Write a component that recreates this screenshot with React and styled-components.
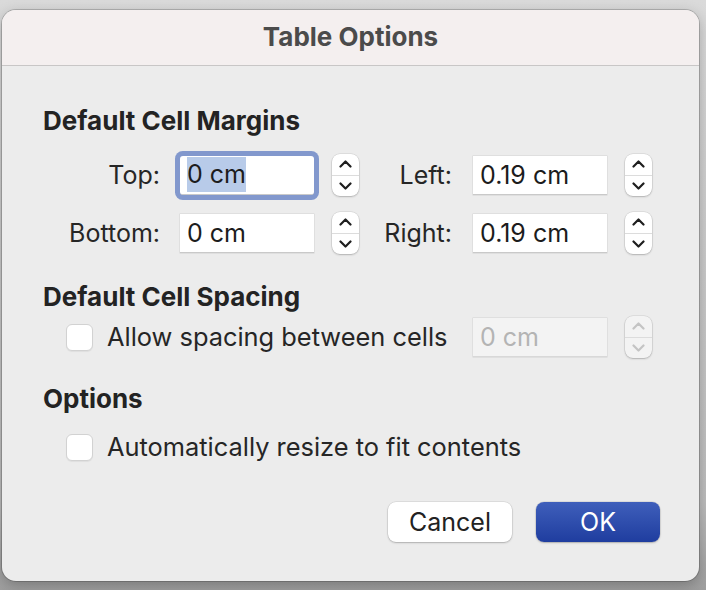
import React from "react"
import styled, { createGlobalStyle } from "styled-components"

const GlobalStyle = createGlobalStyle`
  html, body {
    margin: 0;
    padding: 0;
    width: 706px;
    height: 590px;
    overflow: hidden;
    background: linear-gradient(#dadada, #bdbdbd 85%, #9e9e9e);
    font-family: Inter, "Noto Sans", "Liberation Sans", sans-serif;
  }
`

const Screen = styled.div`
  width: 706px;
  height: 590px;
  padding: 10px 0 0 2px;
  box-sizing: border-box;
`

const Dialog = styled.div`
  width: 697px;
  height: 571px;
  border-radius: 14px;
  background: #ececec;
  overflow: hidden;
  box-shadow: 0 0 0 1px rgba(0, 0, 0, 0.18), 0 4px 14px rgba(0, 0, 0, 0.25);
  display: flex;
  flex-direction: column;
`

const TitleBar = styled.div`
  height: 56px;
  flex-shrink: 0;
  background: #f4efef;
  border-bottom: 1px solid #c8c6c6;
  display: flex;
  align-items: center;
  justify-content: center;
  font-weight: 700;
  font-size: 26px;
  color: #4b4b4b;
  box-sizing: border-box;
  padding-bottom: 2px;
`

const Body = styled.div`
  padding: 42px 0 0 41px;
  display: flex;
  flex-direction: column;
`

const Heading = styled.div`
  font-size: 26px;
  font-weight: 700;
  color: #232323;
  line-height: 26px;
  margin-top: ${p => p.$gap || 0}px;
`

const FieldRows = styled.div`
  display: flex;
  flex-direction: column;
  gap: 16px;
  margin-top: 20px;
`

const FieldRow = styled.div`
  display: flex;
  align-items: center;
`

const Label = styled.label`
  width: ${p => p.$w}px;
  text-align: right;
  margin-right: ${p => p.$mr}px;
  font-size: 25px;
  color: #262626;
  flex-shrink: 0;
`

const Input = styled.div`
  width: 134px;
  height: 39px;
  box-sizing: border-box;
  background: ${p => (p.$disabled ? "#f3f3f3" : "#ffffff")};
  border-bottom: 1px solid ${p => (p.$disabled ? "#d8d8d8" : "#c9c9c9")};
  box-shadow: ${p => (p.$focus ? "0 0 0 5px #8298cd" : "0 0 0 0.5px #d2d2d2")};
  border-radius: ${p => (p.$focus ? "3px" : "0")};
  padding: 0 7px;
  display: flex;
  align-items: center;
  font-size: 25px;
  color: ${p => (p.$disabled ? "#b4b4b4" : "#1c1c1c")};
  flex-shrink: 0;
`

const Selected = styled.span`
  background: #b8cbe9;
  padding: 2px 0 3px;
`

const Stepper = styled.div`
  width: 27px;
  height: 42px;
  margin-left: 18px;
  border-radius: 8px;
  background: ${p => (p.$disabled ? "#f3f3f3" : "#ffffff")};
  box-shadow: 0 0 0 0.5px rgba(0, 0, 0, 0.12), 0 1px 2px rgba(0, 0, 0, 0.2);
  display: flex;
  flex-direction: column;
  overflow: hidden;
  flex-shrink: 0;
`

const StepHalf = styled.div`
  flex: 1;
  display: flex;
  align-items: center;
  justify-content: center;
  & + & {
    border-top: 1px solid #dcdcdc;
  }
`

const CheckRow = styled.div`
  display: flex;
  align-items: center;
  margin-top: ${p => p.$gap}px;
  padding-left: 23px;
`

const CheckBox = styled.span`
  width: 27px;
  height: 27px;
  box-sizing: border-box;
  border-radius: 6px;
  background: #ffffff;
  border: 1px solid #d2d2d2;
  box-shadow: 0 1px 1px rgba(0, 0, 0, 0.06);
  flex-shrink: 0;
`

const CheckText = styled.span`
  font-size: 25.4px;
  line-height: 28px;
  color: #262626;
  margin-left: 14px;
  width: ${p => p.$w || "auto"};
  flex-shrink: 0;
  white-space: nowrap;
`

const Footer = styled.div`
  display: flex;
  gap: 24px;
  margin-top: 41px;
  padding-left: 345px;
`

const Button = styled.button`
  width: 124px;
  height: 40px;
  border: none;
  border-radius: 8px;
  font-family: inherit;
  font-size: 25px;
  color: ${p => (p.$primary ? "#ffffff" : "#222222")};
  background: ${p => (p.$primary ? "linear-gradient(#3f5fbb, #1f3d9f)" : "#ffffff")};
  box-shadow: 0 0 0 0.5px rgba(0, 0, 0, 0.12), 0 1px 2px rgba(0, 0, 0, 0.22);
`

function Chevron({ up, color }) {
  return (
    <svg width="13" height="8" viewBox="0 0 13 8">
      <path
        d={up ? "M1.5 6.5 L6.5 1.5 L11.5 6.5" : "M1.5 1.5 L6.5 6.5 L11.5 1.5"}
        fill="none"
        stroke={color}
        strokeWidth="2.2"
        strokeLinecap="round"
        strokeLinejoin="round"
      />
    </svg>
  )
}

function Spinner({ disabled }) {
  const color = disabled ? "#c4c4c4" : "#1e1e1e"
  return (
    <Stepper $disabled={disabled}>
      <StepHalf><Chevron up color={color} /></StepHalf>
      <StepHalf><Chevron color={color} /></StepHalf>
    </Stepper>
  )
}

function Field({ label, width, gap, value, focus }) {
  return (
    <>
      <Label $w={width} $mr={gap}>{label}</Label>
      <Input $focus={focus}>{focus ? <Selected>{value}</Selected> : value}</Input>
      <Spinner />
    </>
  )
}

export default function App() {
  return (
    <Screen>
      <GlobalStyle />
      <Dialog>
        <TitleBar>Table Options</TitleBar>
        <Body>
          <Heading>Default Cell Margins</Heading>
          <FieldRows>
            <FieldRow>
              <Field label="Top:" width={117} gap={20} value="0 cm" focus />
              <Field label="Left:" width={93} gap={21} value="0.19 cm" />
            </FieldRow>
            <FieldRow>
              <Field label="Bottom:" width={117} gap={20} value="0 cm" />
              <Field label="Right:" width={93} gap={21} value="0.19 cm" />
            </FieldRow>
          </FieldRows>

          <Heading $gap={30}>Default Cell Spacing</Heading>
          <CheckRow $gap={6}>
            <CheckBox />
            <CheckText $w="366px">Allow spacing between cells</CheckText>
            <Input $disabled>0 cm</Input>
            <Spinner disabled />
          </CheckRow>

          <Heading $gap={28}>Options</Heading>
          <CheckRow $gap={21}>
            <CheckBox />
            <CheckText>Automatically resize to fit contents</CheckText>
          </CheckRow>

          <Footer>
            <Button>Cancel</Button>
            <Button $primary>OK</Button>
          </Footer>
        </Body>
      </Dialog>
    </Screen>
  )
}
